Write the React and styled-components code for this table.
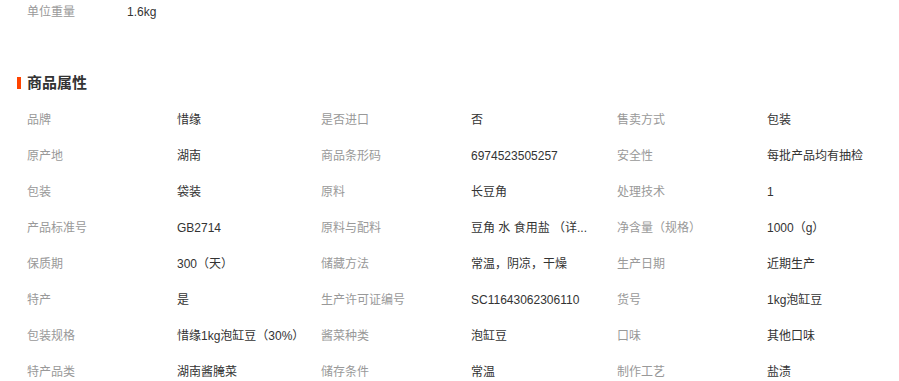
import styled, { createGlobalStyle } from "styled-components";

const GlobalStyle = createGlobalStyle`
  body {
    margin: 0;
    background: #fff;
    font-family: "Liberation Sans", "Noto Sans CJK SC", sans-serif;
    font-size: 12px;
    color: #333;
  }
`;

const attributes = [
  ["品牌", "惜缘"],
  ["是否进口", "否"],
  ["售卖方式", "包装"],
  ["原产地", "湖南"],
  ["商品条形码", "6974523505257"],
  ["安全性", "每批产品均有抽检"],
  ["包装", "袋装"],
  ["原料", "长豆角"],
  ["处理技术", "1"],
  ["产品标准号", "GB2714"],
  ["原料与配料", "豆角 水 食用盐 （详..."],
  ["净含量（规格）", "1000（g）"],
  ["保质期", "300（天）"],
  ["储藏方法", "常温，阴凉，干燥"],
  ["生产日期", "近期生产"],
  ["特产", "是"],
  ["生产许可证编号", "SC11643062306110"],
  ["货号", "1kg泡缸豆"],
  ["包装规格", "惜缘1kg泡缸豆（30%）"],
  ["酱菜种类", "泡缸豆"],
  ["口味", "其他口味"],
  ["特产品类", "湖南酱腌菜"],
  ["储存条件", "常温"],
  ["制作工艺", "盐渍"],
];

export default function App() {
  return (
    <Page>
      <GlobalStyle />
      <TopRow>
        <TopLabel>单位重量</TopLabel>
        <Value>1.6kg</Value>
      </TopRow>
      <SectionTitle>商品属性</SectionTitle>
      <AttrGrid>
        {attributes.map(([label, value]) => (
          <Cell key={label}>
            <Label>{label}</Label>
            <Value>{value}</Value>
          </Cell>
        ))}
      </AttrGrid>
    </Page>
  );
}

const Page = styled.div`
  width: 899px;
  height: 381px;
  overflow: hidden;
`;

const TopRow = styled.div`
  display: flex;
  padding-left: 27px;
  line-height: 24px;
`;

const TopLabel = styled.span`
  width: 100px;
  color: #999;
`;

const SectionTitle = styled.h3`
  display: flex;
  align-items: center;
  gap: 6px;
  margin: 49px 0 0 17px;
  font-size: 15px;
  line-height: 20px;
  font-weight: bold;
  color: #333;

  &::before {
    content: "";
    width: 4px;
    height: 12px;
    background: #ff4400;
  }
`;

const AttrGrid = styled.div`
  display: grid;
  grid-template-columns: 294px 296px 1fr;
  margin-top: 9px;
  padding-left: 27px;
`;

const Cell = styled.div`
  display: flex;
  height: 36px;
  line-height: 36px;
  white-space: nowrap;
`;

const Label = styled.span`
  flex: 0 0 150px;
  color: #999;
`;

const Value = styled.span`
  color: #333;
`;
